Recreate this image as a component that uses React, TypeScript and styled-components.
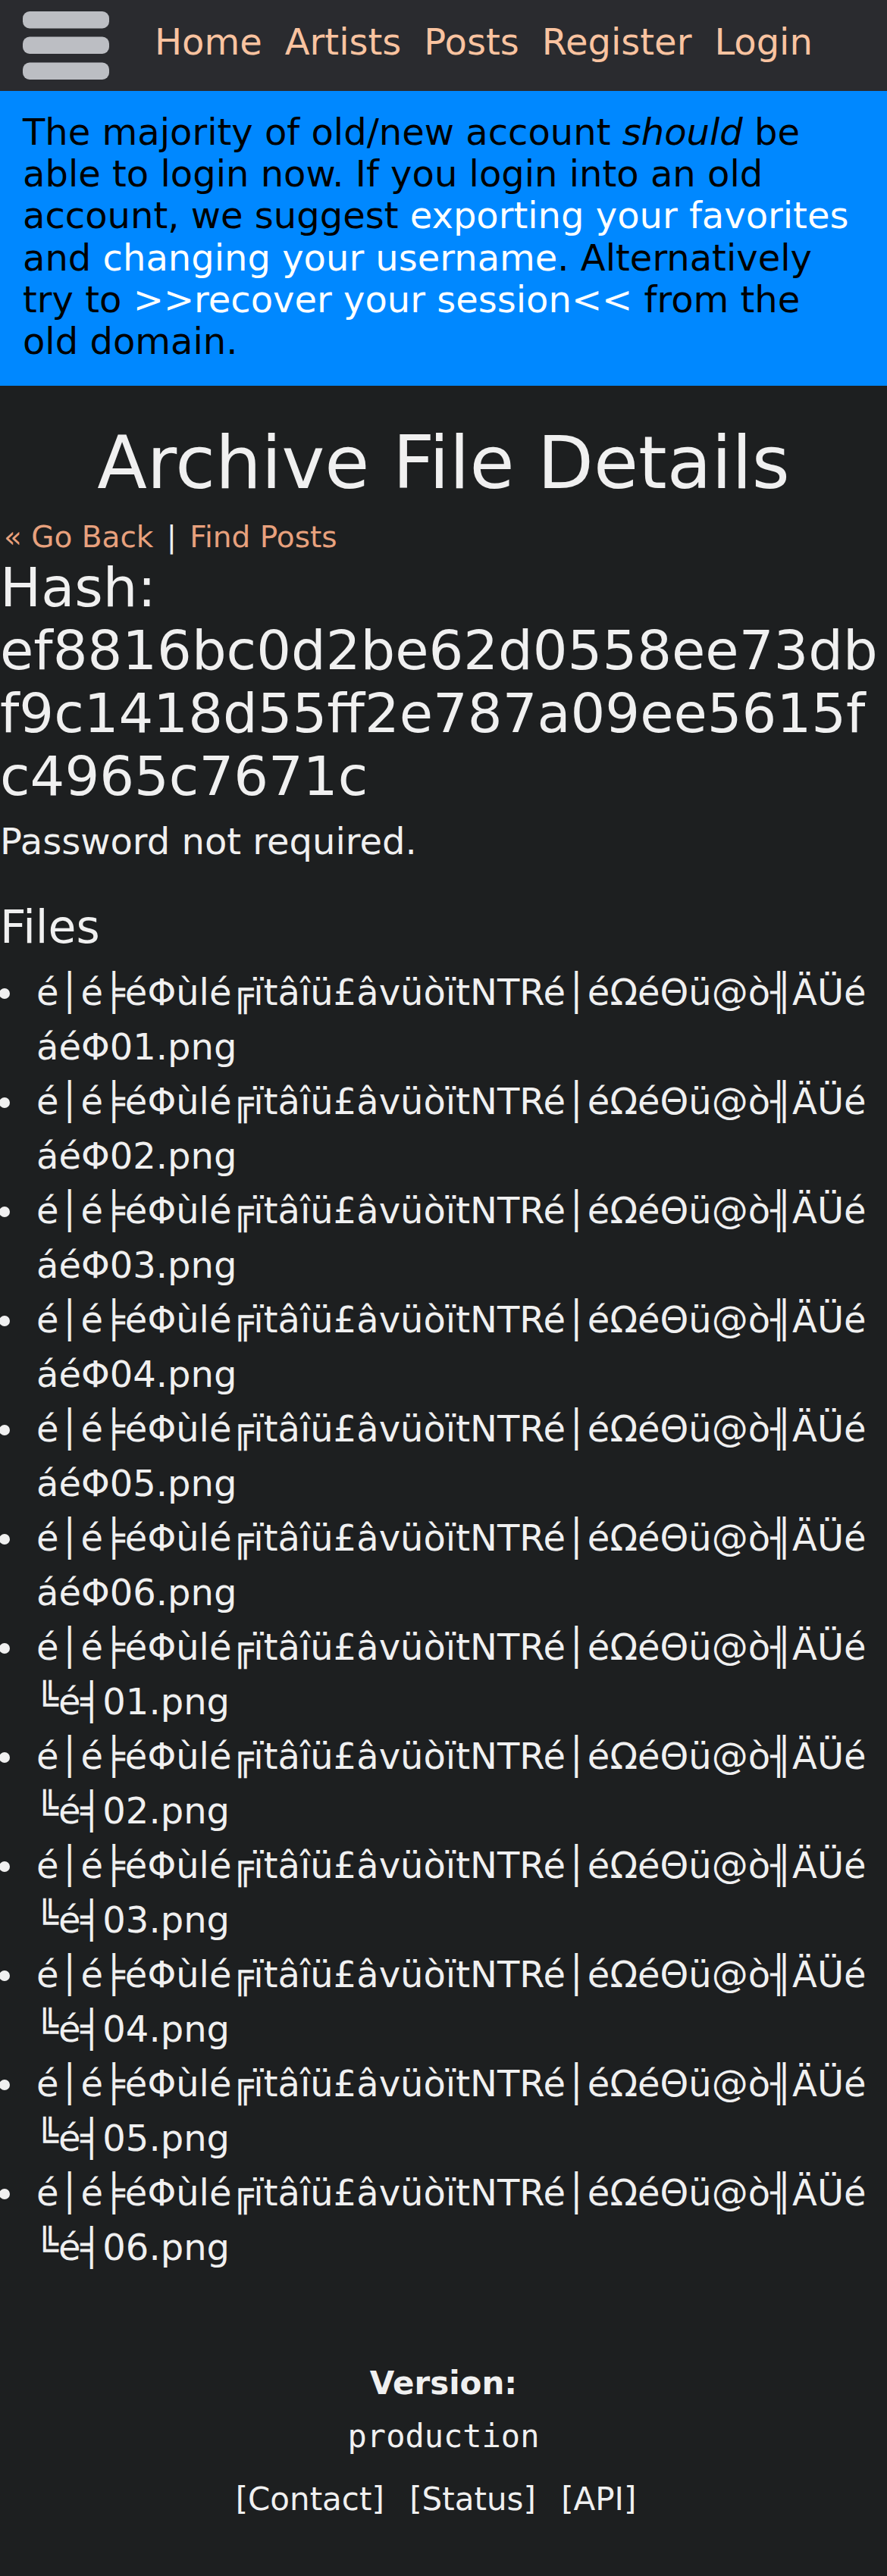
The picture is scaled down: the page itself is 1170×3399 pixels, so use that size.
import React from "react";
import styled, { createGlobalStyle } from "styled-components";

const GlobalStyle = createGlobalStyle`
  *, *::before, *::after { box-sizing: border-box; }
  html { background: #1d1f20; }
  body {
    margin: 0;
    background: #1d1f20;
    color: #f0f0f0;
    font-family: "DejaVu Sans", Verdana, sans-serif;
    font-size: 48px;
    line-height: 1.15;
  }
`;

const Page = styled.div`
  width: 1170px;
  min-height: 3399px;
  background: #1d1f20;
`;

const Header = styled.header`
  height: 120px;
  background: #2a2b2f;
  display: flex;
  align-items: center;
  padding-left: 30px;
`;

const MenuButton = styled.button`
  display: flex;
  border: 0;
  padding: 0;
  background: none;
  cursor: pointer;
`;

const Nav = styled.nav`
  display: flex;
  gap: 30px;
  margin-left: 60px;
  padding-bottom: 9px;
`;

const NavLink = styled.a`
  color: #f9c3a0;
  text-decoration: none;
  font-size: 48px;
`;

const Notice = styled.div`
  background: #0088ff;
  color: #000;
  padding: 27px 30px 31px;
  font-size: 48px;
`;

const NoticeLink = styled.a`
  color: #fff;
  text-decoration: none;
`;

const Main = styled.main`
  display: block;
`;

const Title = styled.h1`
  margin: 47px 0 20px;
  font-size: 96px;
  font-weight: 400;
  text-align: center;
  line-height: 1.15;
`;

const LinkRow = styled.div`
  font-size: 39px;
  padding-left: 5px;
`;

const RowLink = styled.a`
  color: #e8a17d;
  text-decoration: none;
`;

const Separator = styled.span`
  margin: 0 5px;
  color: #f0f0f0;
`;

const HashHeading = styled.h2`
  margin: 3px 0 0;
  font-size: 72px;
  font-weight: 400;
  line-height: 1.15;
  overflow-wrap: break-word;
`;

const Note = styled.p`
  margin: 17px 0 0;
  font-size: 48px;
`;

const SectionHeading = styled.h3`
  margin: 51px 0 0;
  font-size: 60px;
  font-weight: 400;
  line-height: 1.15;
`;

const FileList = styled.ul`
  margin: 15px 0 0;
  padding: 0 0 0 48px;
  list-style: none;
`;

const FileItem = styled.li`
  position: relative;
  font-size: 48px;
  line-height: 72px;
  overflow-wrap: break-word;

  &::before {
    content: "";
    position: absolute;
    left: -49px;
    top: 31px;
    width: 14px;
    height: 14px;
    border-radius: 50%;
    background: #f0f0f0;
  }
`;

const Footer = styled.footer`
  display: flex;
  flex-direction: column;
  align-items: center;
  margin-top: 120px;
  padding-bottom: 76px;
  font-size: 42px;
`;

const VersionLabel = styled.div`
  font-weight: 700;
`;

const VersionValue = styled.code`
  margin-top: 22px;
  font-family: "DejaVu Sans Mono", "Liberation Mono", monospace;
  font-size: 42px;
`;

const FooterLinks = styled.div`
  margin-top: 35px;
  text-align: center;
`;

const FooterLink = styled.a`
  color: #f0f0f0;
  text-decoration: none;
  margin-right: 20px;
`;

const Hamburger = () => (
  <svg width="114" height="90" viewBox="0 0 114 90">
    <rect x="0" y="0" width="114" height="22.5" rx="9" fill="#bcbec3" />
    <rect x="0" y="33.5" width="114" height="22.5" rx="9" fill="#bcbec3" />
    <rect x="0" y="67.5" width="114" height="22.5" rx="9" fill="#bcbec3" />
  </svg>
);

const prefix = "é│é╞éΦùlé╔ïtâîü£âvüòïtNTRé│éΩéΘü@ò╢ÄÜé";
const files = [
  ...["01", "02", "03", "04", "05", "06"].map((n) => `${prefix}áéΦ${n}.png`),
  ...["01", "02", "03", "04", "05", "06"].map((n) => `${prefix}╚é╡${n}.png`),
];

const HASH = "ef8816bc0d2be62d0558ee73dbf9c1418d55ff2e787a09ee5615fc4965c7671c";

export default function App() {
  return (
    <Page>
      <GlobalStyle />
      <Header>
        <MenuButton aria-label="menu">
          <Hamburger />
        </MenuButton>
        <Nav>
          <NavLink href="#">Home</NavLink>
          <NavLink href="#">Artists</NavLink>
          <NavLink href="#">Posts</NavLink>
          <NavLink href="#">Register</NavLink>
          <NavLink href="#">Login</NavLink>
        </Nav>
      </Header>
      <Notice>
        The majority of old/new account <em>should</em> be able to login now. If you login into an old
        account, we suggest <NoticeLink href="#">exporting your favorites</NoticeLink> and{" "}
        <NoticeLink href="#">changing your username</NoticeLink>. Alternatively try to{" "}
        <NoticeLink href="#">&gt;&gt;recover your session&lt;&lt;</NoticeLink> from the old domain.
      </Notice>
      <Main>
        <Title>Archive File Details</Title>
        <LinkRow>
          <RowLink href="#">« Go Back</RowLink>
          <Separator> | </Separator>
          <RowLink href="#">Find Posts</RowLink>
        </LinkRow>
        <HashHeading>Hash: {HASH}</HashHeading>
        <Note>Password not required.</Note>
        <SectionHeading>Files</SectionHeading>
        <FileList>
          {files.map((f, i) => (
            <FileItem key={i}>{f}</FileItem>
          ))}
        </FileList>
      </Main>
      <Footer>
        <VersionLabel>Version:</VersionLabel>
        <VersionValue>production</VersionValue>
        <FooterLinks>
          <FooterLink href="#">[Contact]</FooterLink>{" "}
          <FooterLink href="#">[Status]</FooterLink>{" "}
          <FooterLink href="#">[API]</FooterLink>
        </FooterLinks>
      </Footer>
    </Page>
  );
}
